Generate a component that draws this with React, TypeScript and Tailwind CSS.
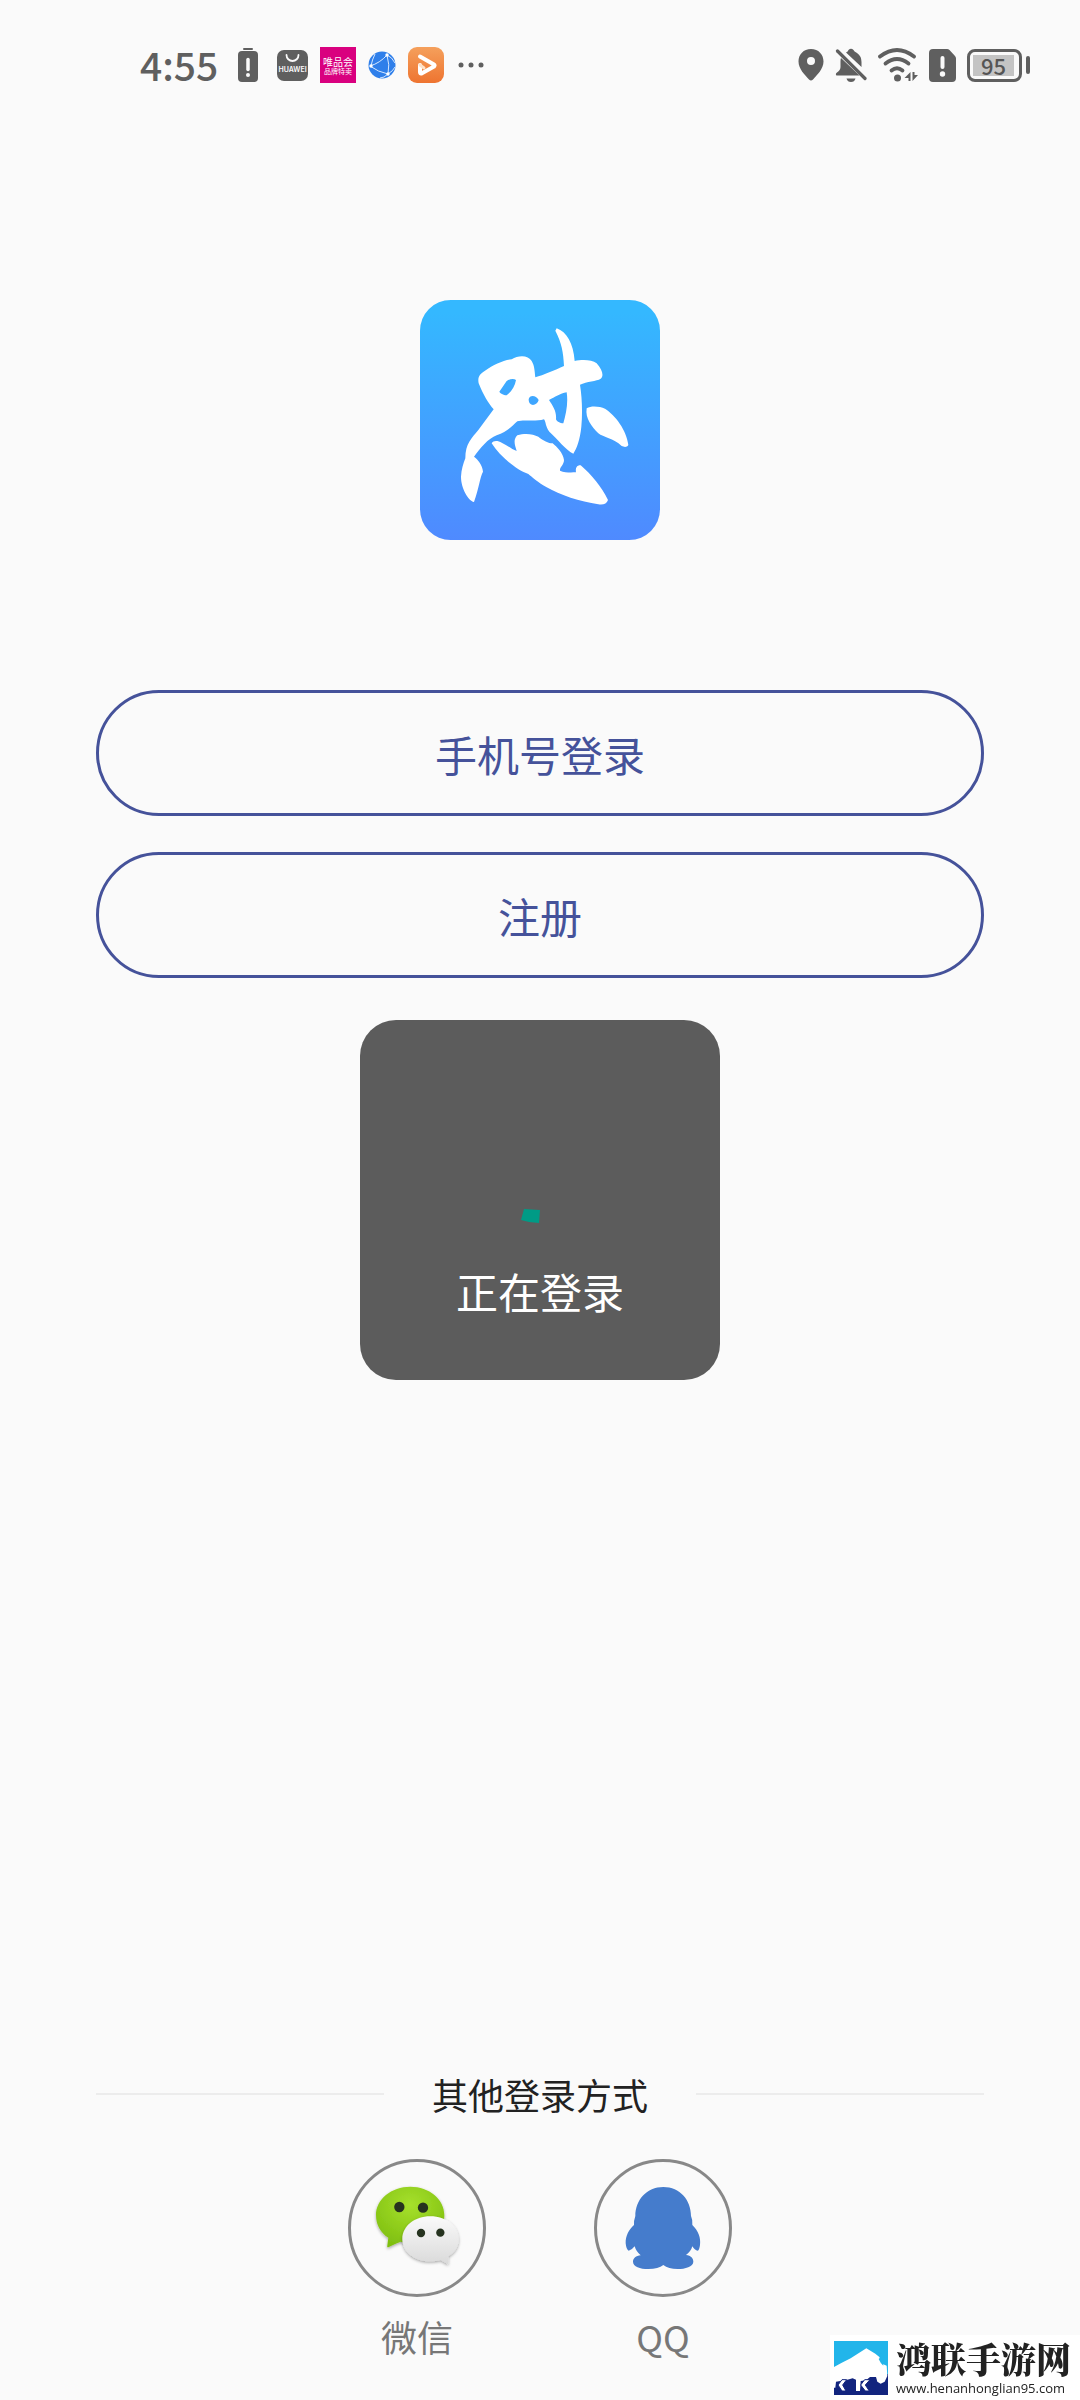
import { FC, ReactNode } from 'react';

const BatteryAlertIcon: FC = () => (
  <svg viewBox="0 0 20 34" className="mr-[7px] h-[34px] w-5" aria-hidden="true">
    <rect x="5" y="0" width="10" height="2" rx="1" fill="#5f5f5f" />
    <rect x="0" y="3" width="20" height="31" rx="4" fill="#5f5f5f" />
    <path d="M10 11.500v10" stroke="#fafafa" strokeWidth="3.500" strokeLinecap="round" />
    <circle cx="10" cy="27" r="2" fill="#fafafa" />
  </svg>
);

const HuaweiIcon: FC = () => (
  <svg viewBox="0 0 31 31" className="size-[31px]" aria-hidden="true">
    <rect width="31" height="31" rx="7" fill="#5f5f5f" />
    <path d="M9.500 5a6 6 0 0 0 12 0" fill="none" stroke="#fafafa" strokeWidth="1.800" strokeLinecap="round" />
    <text x="15.500" y="21.500" textAnchor="middle" fontSize="7" fontWeight="600" fontFamily="Inter, sans-serif" fill="#fafafa">
      HUAWEI
    </text>
  </svg>
);

const VipIcon: FC = () => (
  <svg viewBox="0 0 36 36" className="size-9" aria-hidden="true">
    <rect width="36" height="36" fill="#d9007f" />
    <text x="18" y="18.500" textAnchor="middle" fontSize="10" fontFamily="Noto Sans CJK SC, sans-serif" fill="#fff">
      唯品会
    </text>
    <text x="18" y="26.500" textAnchor="middle" fontSize="7" fontFamily="Noto Sans CJK SC, sans-serif" fill="#fff">
      品牌特卖
    </text>
  </svg>
);

const GlobeIcon: FC = () => (
  <svg viewBox="0 0 28 28" className="size-7" aria-hidden="true">
    <circle cx="14" cy="14" r="13.500" fill="#2f7fea" />
    <g fill="none" stroke="#d6e8ff" strokeWidth="1">
      <path d="M2 15Q12 12 19 4Q22 14 20 23Q10 21 2 15" />
      <path d="M7 3Q4 9 3 15M19 4Q24 6 27 12M20 23Q25 20 27 16M20 23Q16 27 12 27" />
    </g>
    <g fill="#fff">
      <circle cx="19" cy="4" r="1.700" />
      <circle cx="3" cy="15" r="1.700" />
      <circle cx="20" cy="23" r="1.700" />
    </g>
  </svg>
);

const VideoIcon: FC = () => (
  <svg viewBox="0 0 36 36" className="size-9" aria-hidden="true">
    <defs>
      <linearGradient id="video" x1="0" y1="0" x2="0" y2="1">
        <stop offset="0" stopColor="#f5a05c" />
        <stop offset="1" stopColor="#ee7430" />
      </linearGradient>
    </defs>
    <rect width="36" height="36" rx="9" fill="url(#video)" />
    <path
      d="M12 9.500L26 17.500Q27 18.500 26 19.500L13.500 26.500Q12 27 12 25V18"
      fill="none"
      stroke="#fff"
      strokeWidth="4"
      strokeLinecap="round"
      strokeLinejoin="round"
    />
    <path d="M12 18l4 3" stroke="#ffe2c8" strokeWidth="3" strokeLinecap="round" />
  </svg>
);

const MoreIcon: FC = () => (
  <svg viewBox="0 0 26 6" className="ml-0.5 h-1.5 w-[26px]" fill="#5f5f5f" aria-hidden="true">
    <circle cx="3" cy="3" r="2.500" />
    <circle cx="13" cy="3" r="2.500" />
    <circle cx="23" cy="3" r="2.500" />
  </svg>
);

const PinIcon: FC = () => (
  <svg viewBox="0 0 26 32" className="h-8 w-[26px]" aria-hidden="true">
    <path
      d="M13 0C5.500 0 .5 5.500 .5 12.500C.5 20 7 26 11 30.500Q13 32.500 15 30.500C19 26 25.500 20 25.500 12.500C25.500 5.500 20.500 0 13 0ZM13 8a4 4 0 1 1 0 8a4 4 0 1 1 0-8Z"
      fill="#5f5f5f"
      fillRule="evenodd"
    />
  </svg>
);

const BellOffIcon: FC = () => (
  <svg viewBox="0 0 32 34" className="h-[34px] w-8" aria-hidden="true">
    <path
      d="M11 4.500Q13 3.500 13.500 2Q16 -.5 18.500 2Q19 3.500 22 5Q26.500 8 26.500 14V19ZM6 10L24.500 27.500H1.500Q0 26 2 24.500Q5.500 22 5.500 19V13Q5.500 11 6 10ZM11.500 30.500H20.500Q19.500 34 16 34Q12.500 34 11.500 30.500Z"
      fill="#5f5f5f"
    />
    <path d="M2.500 3L30 30.500" stroke="#5f5f5f" strokeWidth="3.200" strokeLinecap="round" />
  </svg>
);

const WifiIcon: FC = () => (
  <svg viewBox="0 0 40 34" className="h-[34px] w-10" aria-hidden="true">
    <g fill="none" stroke="#5f5f5f" strokeWidth="3.800" strokeLinecap="round">
      <path d="M2 8.500Q19 -4.500 36 8.500" />
      <path d="M7.500 15.500Q19 6.500 30.500 15.500" />
      <path d="M13.500 22.500Q19 18 24.500 22.500" />
    </g>
    <circle cx="19.500" cy="30" r="3.500" fill="#5f5f5f" />
    <path d="M32.500 24v9h-2v-3h-4zM34.500 33v-9h2v3h3.500z" fill="#5f5f5f" />
  </svg>
);

const SimAlertIcon: FC = () => (
  <svg viewBox="0 0 27 33" className="h-[33px] w-[27px]" aria-hidden="true">
    <path
      d="M4 0H18Q19.500 0 20.500 1L26 7Q27 8 27 9.500V29Q27 33 23 33H4Q0 33 0 29V4Q0 0 4 0Z"
      fill="#5f5f5f"
    />
    <path d="M13.500 9v9" stroke="#fafafa" strokeWidth="4" strokeLinecap="round" />
    <circle cx="13.500" cy="25" r="2.700" fill="#fafafa" />
  </svg>
);

const BatteryLevel: FC<{ level: number }> = ({ level }) => (
  <div className="flex items-center gap-1">
    <div className="flex h-[33px] w-[55px] rounded-lg border-3 border-[#5f5f5f] p-[3px]">
      <div className="flex w-[41px] items-center justify-center bg-[#c4c4c4] text-[22px] leading-5 font-medium text-[#555]">
        {level}
      </div>
    </div>
    <div className="h-[18px] w-1 rounded-sm bg-[#5f5f5f]" />
  </div>
);

const AppLogo: FC = () => (
  <svg viewBox="60 60 720 720" className="size-60" role="img" aria-label="怼">
    <defs>
      <linearGradient id="logo" x1="0" y1="0" x2="0" y2="1">
        <stop offset="0.050" stopColor="#34b8ff" />
        <stop offset="1" stopColor="#4f8aff" />
      </linearGradient>
    </defs>
    <rect x="60" y="60" width="720" height="720" rx="92" fill="url(#logo)" />
    <g fill="#fff" fillRule="evenodd">
      <path d="M470 145C500 155 520 190 524 243C545 238 575 238 590 250C608 270 612 288 602 296C590 304 560 304 540 314C546 350 548 400 544 440C540 480 530 505 520 521C500 512 470 475 448 455C436 440 438 425 432 418C405 426 370 418 352 424C335 440 320 455 290 466C265 475 240 505 222 530C235 540 247 555 249 575C240 590 237 625 222 666C205 662 183 625 183 590C184 570 190 550 196 535C196 490 215 475 235 450L281 388C265 370 250 345 236 310C232 290 240 282 255 272C280 255 310 240 335 238C355 225 385 225 395 243C404 258 404 275 406 292C430 285 465 270 492 258C490 215 485 190 466 152ZM298 335L320 303C330 296 342 295 348 300C345 318 335 335 320 346C310 345 300 340 298 335ZM386 358C388 344 408 344 416 360C412 378 386 382 386 358ZM447 360C465 352 480 340 500 337C505 370 498 400 490 430C480 430 470 425 468 418C470 395 460 380 447 360Z" />
      <path d="M560 385C575 376 600 380 615 386C645 405 680 450 685 495C680 503 672 501 665 498C640 475 610 472 595 460C575 440 555 415 560 385Z" />
      <path d="M275 490C280 480 295 482 305 488C320 495 335 508 350 513C345 495 338 480 352 466C375 458 400 462 415 470C430 482 445 490 458 490C470 500 490 520 492 540C492 555 478 562 480 572C495 578 510 578 528 577C526 565 530 555 542 556C575 585 605 620 624 660C620 672 610 675 595 673C540 665 480 645 440 622C415 608 395 590 385 582C350 570 300 530 275 490Z" />
    </g>
  </svg>
);

const WechatIcon: FC = () => (
  <svg viewBox="33 36 396 396" className="size-full" aria-hidden="true">
    <defs>
      <radialGradient id="green" cx="0.500" cy="0.300" r="0.700">
        <stop offset="0" stopColor="#a6e02c" />
        <stop offset="1" stopColor="#7fbf10" />
      </radialGradient>
      <linearGradient id="white" x1="0" y1="0" x2="0" y2="1">
        <stop offset="0" stopColor="#fafafa" />
        <stop offset="1" stopColor="#dadada" />
      </linearGradient>
      <filter id="shade" x="-20%" y="-20%" width="140%" height="140%">
        <feDropShadow dx="0" dy="4" stdDeviation="4" floodColor="#000" floodOpacity="0.350" />
      </filter>
    </defs>
    <path
      d="M211 110C268 110 313 148 313 195C313 242 268 280 211 280Q198 280 182 275Q165 281 145 292Q140 293 142 286L145 263C121 248 108 224 108 195C108 148 154 110 211 110Z"
      fill="url(#green)"
      filter="url(#shade)"
    />
    <path
      d="M271 199C319 199 356 228 356 267C356 291 344 308 325 319V340Q325 345 319 340L302 330Q288 334 271 334C224 334 187 306 187 267C187 228 224 199 271 199Z"
      fill="url(#white)"
      filter="url(#shade)"
    />
    <g fill="#26331f">
      <circle cx="178" cy="171" r="15.500" />
      <circle cx="249" cy="173" r="15.500" />
      <circle cx="243" cy="249" r="12.500" />
      <circle cx="301" cy="248" r="12.500" />
    </g>
  </svg>
);

const QQIcon: FC = () => (
  <svg viewBox="36 36 396 396" className="size-full" aria-hidden="true">
    <path
      d="M235 111C285 111 318 150 318 198Q323 208 322 225C340 242 348 264 345 285Q343 301 338 302Q329 301 322 289Q318 304 303 315C318 317 325 325 325 335C325 350 300 357 278 357Q250 357 235 345Q220 357 190 357C165 357 144 350 144 335C144 324 153 318 167 316Q153 304 149 289Q140 301 131 302Q124 300 122 280C121 258 132 238 147 225Q146 212 151 198C151 150 185 111 235 111Z"
      fill="#457ccc"
    />
  </svg>
);

const BullIcon: FC = () => (
  <svg viewBox="0 0 162 162" className="size-[54px]" aria-hidden="true">
    <rect width="162" height="162" fill="#22b5ea" />
    <path d="M0 100H162V162H0Z" fill="#12247e" />
    <path
      d="M0 78L22 66L50 52L97 22L124 38L136 48L142 62L148 70L158 74L160 105L152 122L140 128L130 122L126 108L108 108L96 118L80 120L78 150H66V116L56 112L40 116L6 122L4 140H0Z"
      fill="#fff"
    />
    <path d="M24 116H38L26 132L36 150H24L12 132ZM92 116H108L94 132L106 150H94L80 132Z" fill="#fff" stroke="#12247e" strokeWidth="3" />
    <path d="M140 34Q152 44 150 56L144 60Q150 66 148 74Q140 68 134 54Q144 48 140 34Z" fill="#22b5ea" />
  </svg>
);

const StatusBar: FC = () => (
  <header className="flex h-[130px] items-center justify-between pr-[50px] pl-[140px]">
    <div className="flex items-center">
      <time className="mr-5 pb-0.5 text-[39px] leading-[60px] font-medium text-[#5f5f5f]">4:55</time>
      <div className="flex items-center gap-3">
        <BatteryAlertIcon />
        <HuaweiIcon />
        <VipIcon />
        <GlobeIcon />
        <VideoIcon />
        <MoreIcon />
      </div>
    </div>
    <div className="flex items-center gap-[11px]">
      <PinIcon />
      <BellOffIcon />
      <WifiIcon />
      <SimAlertIcon />
      <BatteryLevel level={95} />
    </div>
  </header>
);

const OutlineButton: FC<{ children: ReactNode }> = ({ children }) => (
  <button
    type="button"
    className="h-[126px] w-full rounded-full border-3 border-[#45529a] text-[42px] text-[#45529a]"
  >
    {children}
  </button>
);

const SocialButton: FC<{ label: string; icon: ReactNode }> = ({ label, icon }) => (
  <button type="button" className="flex flex-col items-center gap-3">
    <span className="size-[138px] rounded-full border-3 border-[#888]">{icon}</span>
    <span className="text-4xl leading-[54px] text-[#777]">{label}</span>
  </button>
);

const LoadingToast: FC = () => (
  <div className="pointer-events-none fixed inset-0 flex items-center justify-center">
    <div role="status" className="flex size-90 flex-col items-center justify-end gap-5 rounded-[36px] bg-[#5c5c5c] pb-[59px]">
      <svg viewBox="0 0 120 120" className="size-30" aria-hidden="true">
        <path d="M44 88L60 89L59 102Q50 102 41 99Z" fill="#009b86" />
      </svg>
      <p className="text-[42px] leading-[60px] text-white">正在登录</p>
    </div>
  </div>
);

const Watermark: FC = () => (
  <div className="fixed right-0 bottom-0 flex h-[65px] w-[250px] items-center gap-2 bg-white pl-1">
    <BullIcon />
    <div className="flex flex-col pt-1 text-[#222]">
      <span className="font-['Noto_Serif_CJK_SC','Noto_Sans_CJK_SC',serif] text-[35px] leading-9 font-black">
        鸿联手游网
      </span>
      <a href="#" className="font-['Open_Sans',sans-serif] text-[13px] leading-6 font-medium">
        www.henanhonglian95.com
      </a>
    </div>
  </div>
);

export default function App() {
  return (
    <div className="flex min-h-screen flex-col bg-[#fafafa] font-['Noto_Sans_CJK_SC',sans-serif]">
      <StatusBar />
      <main className="flex flex-1 flex-col px-24">
        <div className="mt-[170px] flex justify-center">
          <AppLogo />
        </div>
        <div className="mt-[150px] flex flex-col gap-9">
          <OutlineButton>手机号登录</OutlineButton>
          <OutlineButton>注册</OutlineButton>
        </div>
        <section className="mt-auto pb-[37px]">
          <div className="flex items-center gap-12">
            <span className="h-0.5 flex-1 bg-[#ececec]" />
            <h2 className="text-4xl leading-[54px] text-[#222]">其他登录方式</h2>
            <span className="h-0.5 flex-1 bg-[#ececec]" />
          </div>
          <div className="mt-[38px] flex justify-center gap-27">
            <SocialButton label="微信" icon={<WechatIcon />} />
            <SocialButton label="QQ" icon={<QQIcon />} />
          </div>
        </section>
      </main>
      <LoadingToast />
      <Watermark />
    </div>
  );
}
